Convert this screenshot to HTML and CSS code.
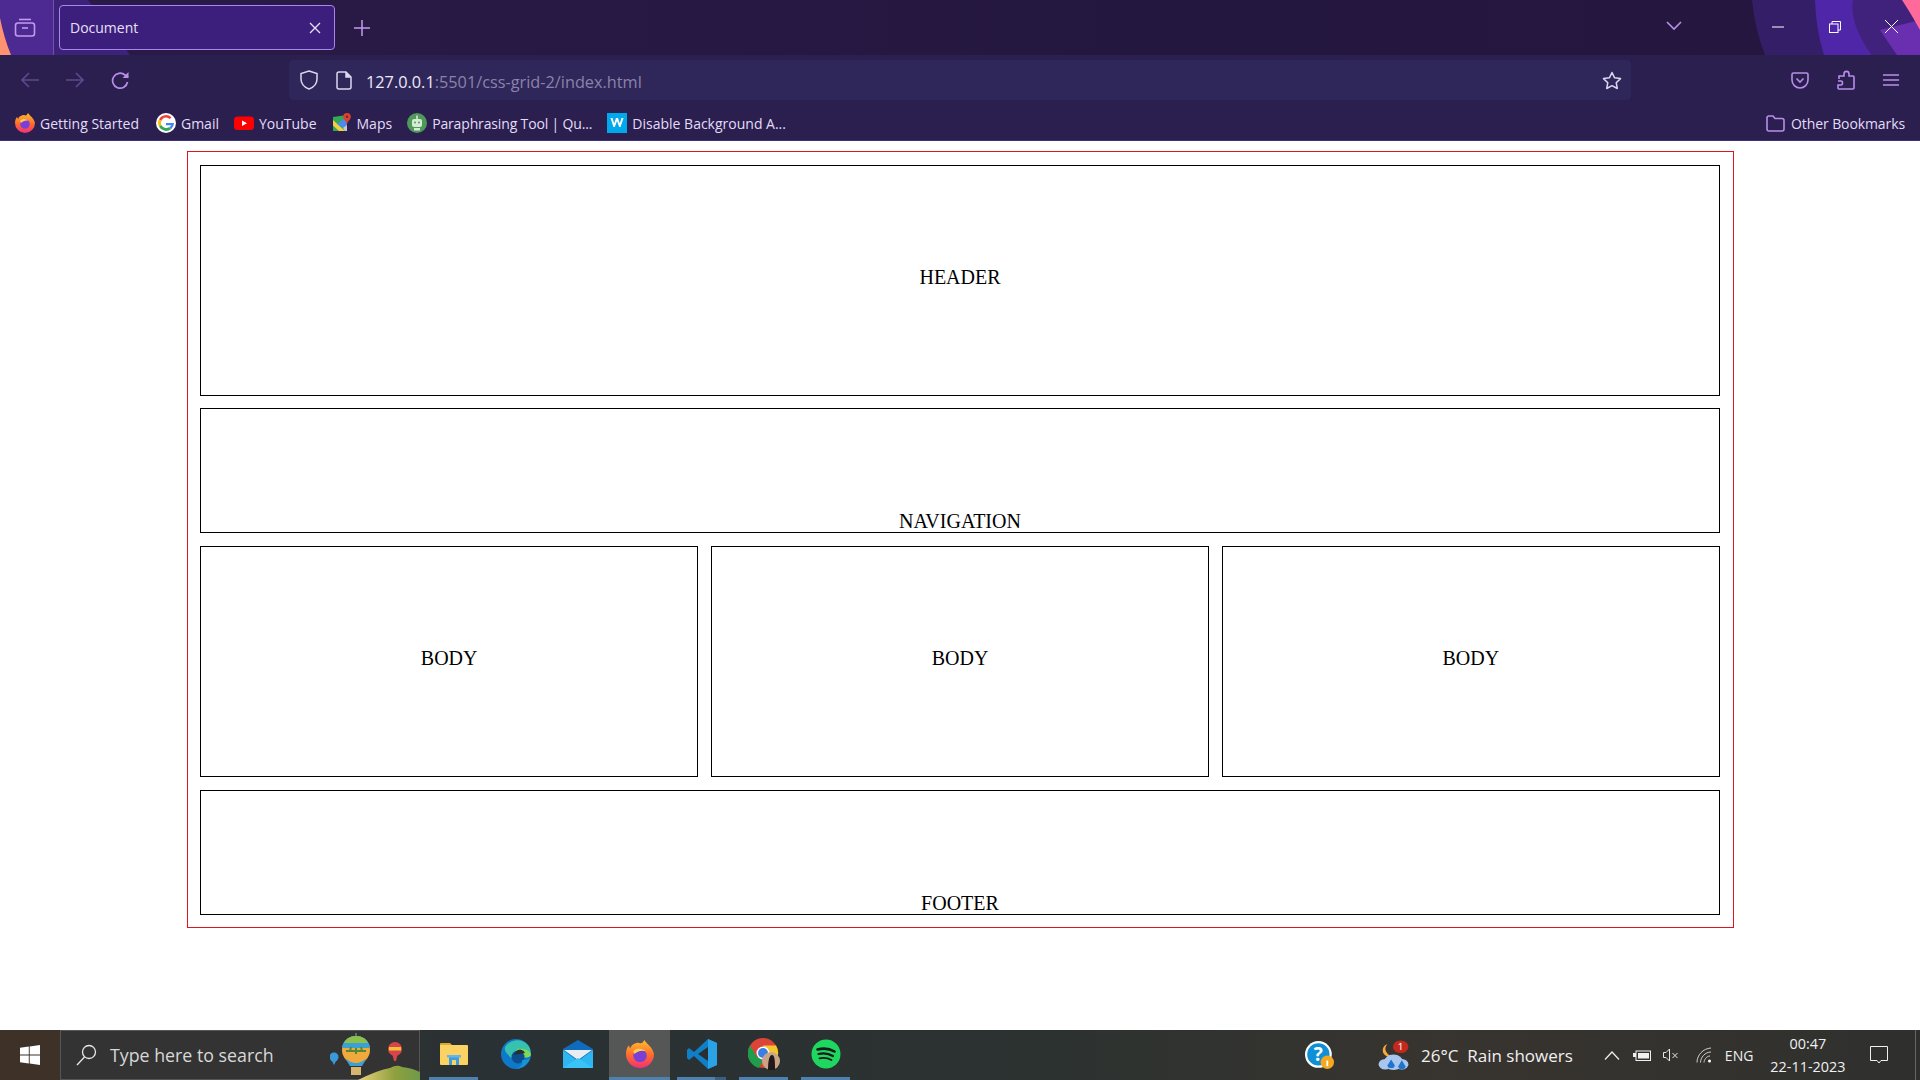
FILE: index.html
```html
<!DOCTYPE html>
<html lang="en">
<head>
  <meta charset="UTF-8" />
  <title>Document</title>
  <link rel="stylesheet" href="styles.css">
</head>
<body>
  <div class="tabbar">
    <svg class="swoosh" width="1920" height="55" viewBox="0 0 1920 55">
      <path d="M0 0H54V55H0Z" fill="#4d2a92"/>
      <path d="M54 0H88Q110 28 130 55H54Z" fill="#3c2279"/>
      <path d="M0 18Q4 38 11 55H0Z" fill="#ff9270"/>
      <path d="M1752 0Q1755 30 1765 55H1920V0Z" fill="#351e68"/>
      <path d="M1815 0Q1816 30 1824 55H1872Q1850 25 1853 0Z" fill="#5026a8"/>
      <path d="M1853 0Q1850 25 1872 55H1920V0Z" fill="#40227c"/>
      <path d="M1880 30Q1890 45 1897 55H1920V20Z" fill="#6a2eb0"/>
      <path d="M1902 0Q1910 12 1920 30V0Z" fill="#ff6a9a"/>
    </svg>
    <div class="tabs-btn">
      <svg width="22" height="22" viewBox="0 0 22 22" fill="none" stroke="#c39af0" stroke-width="1.6"><path d="M5 3.5H17"/><rect x="1.5" y="7" width="19" height="13" rx="2.5"/><path d="M8 12H14"/></svg>
    </div>
    <div class="tab">
      <span class="tab-title">Document</span>
      <svg width="12" height="12" viewBox="0 0 12 12" stroke="#e9e2fa" stroke-width="1.3"><path d="M1 1L11 11M11 1L1 11"/></svg>
    </div>
    <svg class="new-tab" width="16" height="16" viewBox="0 0 16 16" stroke="#c39af0" stroke-width="1.5"><path d="M8 0V16M0 8H16"/></svg>
    <div class="tabbar-gap"></div>
    <svg class="tab-list" width="16" height="10" viewBox="0 0 16 10" fill="none" stroke="#b98ee8" stroke-width="1.6"><path d="M1 1L8 8L15 1"/></svg>
    <div class="win-btns">
      <svg width="12" height="12" viewBox="0 0 12 12" stroke="#fff" stroke-width="1"><path d="M0 6H12"/></svg>
      <svg width="12" height="12" viewBox="0 0 12 12" fill="none" stroke="#fff" stroke-width="1"><rect x=".5" y="3" width="8.500" height="8.500"/><path d="M3 3V.5H11.500V9H9"/></svg>
      <svg width="13" height="13" viewBox="0 0 13 13" stroke="#fff" stroke-width="1"><path d="M0 0L13 13M13 0L0 13"/></svg>
    </div>
  </div>

  <div class="toolbar">
    <div class="nav-btns">
      <svg width="18" height="16" viewBox="0 0 18 16" fill="none" stroke="#5d4a8c" stroke-width="1.6"><path d="M18 8H1M8 1L1 8L8 15"/></svg>
      <svg width="18" height="16" viewBox="0 0 18 16" fill="none" stroke="#5d4a8c" stroke-width="1.6"><path d="M0 8H17M10 1L17 8L10 15"/></svg>
      <svg width="19" height="19" viewBox="0 0 19 19" fill="none" stroke="#b98ee8" stroke-width="1.7"><path d="M16.500 11A7.500 7.500 0 1 1 14 4L17 6.500"/><path d="M17.500 1V7H11.500" fill="#b98ee8" stroke="none"/></svg>
    </div>
    <div class="urlbar">
      <svg width="18" height="20" viewBox="0 0 18 20" fill="none" stroke="#ddd6f0" stroke-width="1.5"><path d="M9 1L17 3.500V9C17 14 13 17.500 9 19C5 17.500 1 14 1 9V3.500Z"/></svg>
      <svg class="doc-icon" width="16" height="19" viewBox="0 0 16 19" fill="none" stroke="#ddd6f0" stroke-width="1.500"><path d="M3 1H10L15 6V16A2 2 0 0 1 13 18H3A2 2 0 0 1 1 16V3A2 2 0 0 1 3 1Z"/><path d="M10 1V6H15" fill="#ddd6f0"/></svg>
      <span class="url"><span class="url-host">127.0.0.1</span>:5501/css-grid-2/index.html</span>
      <svg width="20" height="19" viewBox="0 0 20 19" fill="none" stroke="#ddd6f0" stroke-width="1.500" stroke-linejoin="round"><path d="M10 1.500L12.600 6.800L18.500 7.600L14.200 11.700L15.300 17.500L10 14.700L4.700 17.500L5.800 11.700L1.500 7.600L7.400 6.800Z"/></svg>
    </div>
    <div class="tool-btns">
      <svg width="18" height="17" viewBox="0 0 18 17" fill="none" stroke="#b98ee8" stroke-width="1.600"><path d="M2.500 1H15.500A1.500 1.500 0 0 1 17 2.500V8A8 8 0 0 1 1 8V2.500A1.500 1.500 0 0 1 2.500 1Z"/><path d="M5.500 6.500L9 10L12.500 6.500"/></svg>
      <svg width="18" height="20" viewBox="0 0 18 20" fill="none" stroke="#b98ee8" stroke-width="1.600"><path d="M1 11H4C6 11 6 15 4 15H1V18A1 1 0 0 0 2 19H16A1 1 0 0 0 17 18V7A1 1 0 0 0 16 6H12V4C12 .5 7 .5 7 4V6H2V9"/></svg>
      <svg width="16" height="12" viewBox="0 0 16 12" stroke="#b98ee8" stroke-width="1.500"><path d="M0 1H16M0 6H16M0 11H16"/></svg>
    </div>
  </div>

  <div class="bookmarks">
    <a class="bm bm-first">
      <svg width="20" height="20" viewBox="0 0 20 20"><use href="#ff-logo"/></svg>
      Getting Started
    </a>
    <a class="bm">
      <svg width="20" height="20" viewBox="0 0 20 20"><use href="#g-logo"/></svg>
      Gmail
    </a>
    <a class="bm">
      <svg width="20" height="20" viewBox="0 0 20 20"><rect y="3.500" width="20" height="13.500" rx="3.500" fill="#f00"/><path d="M8 7.500L13 10.200L8 13Z" fill="#fff"/></svg>
      YouTube
    </a>
    <a class="bm">
      <svg width="20" height="20" viewBox="0 0 20 20"><path d="M1 4L15 2V18H1Z" fill="#34a853"/><path d="M1 7L13 18H7L1 12.500Z" fill="#f4d03f"/><path d="M5 11L15 4V12L11 15Z" fill="#4c8bf5"/><path d="M11 15L15 12V18H13Z" fill="#c9c9c9"/><path d="M15 0A3.800 3.800 0 0 1 18.800 3.800C18.800 6.500 16 8 15 11C14 8 11.200 6.500 11.200 3.800A3.800 3.800 0 0 1 15 0Z" fill="#d9432f"/><circle cx="15" cy="3.800" r="1.300" fill="#8c2318"/></svg>
      Maps
    </a>
    <a class="bm bm-para">
      <svg width="20" height="20" viewBox="0 0 20 20"><circle cx="10" cy="10" r="10" fill="#4f9a58"/><rect x="5" y="6" width="10" height="8" rx="2" fill="#d8ead8"/><circle cx="8" cy="9.500" r="1" fill="#4f9a58"/><circle cx="12" cy="9.500" r="1" fill="#4f9a58"/><rect x="9.200" y="2.500" width="1.600" height="3.500" fill="#d8ead8"/><rect x="7" y="15" width="6" height="2.500" fill="#d8ead8"/></svg>
      Paraphrasing Tool | Qu...
    </a>
    <a class="bm">
      <svg width="20" height="20" viewBox="0 0 20 20"><rect width="20" height="20" fill="#00a8ec"/><path d="M3.500 5L6.500 14H7.800L10 8L12.200 14H13.500L16.500 5H14.500L12.800 10.500L11 5H9L7.200 10.500L5.500 5Z" fill="#fff"/></svg>
      Disable Background A...
    </a>
    <div class="bm-gap"></div>
    <a class="bm bm-other">
      <svg width="19" height="17" viewBox="0 0 19 17" fill="none" stroke="#b98ee8" stroke-width="1.600"><path d="M1 3A2 2 0 0 1 3 1H7L9 3.500H16A2 2 0 0 1 18 5.500V14A2 2 0 0 1 16 16H3A2 2 0 0 1 1 14Z"/></svg>
      Other Bookmarks
    </a>
  </div>

  <main class="page">
    <div class="container">
      <div class="box box-full box-tall">HEADER</div>
      <div class="box box-full box-short">NAVIGATION</div>
      <div class="box box-tall">BODY</div>
      <div class="box box-tall">BODY</div>
      <div class="box box-tall">BODY</div>
      <div class="box box-full box-short">FOOTER</div>
    </div>
  </main>

  <div class="taskbar">
    <div class="start">
      <svg width="20" height="20" viewBox="0 0 20 20" fill="#fff"><path d="M0 2.800L8.800 1.600V9.500H0ZM9.700 1.500L20 0V9.500H9.700ZM0 10.500H8.800V18.400L0 17.200ZM9.700 10.500H20V20L9.700 18.500Z"/></svg>
    </div>
    <div class="search">
      <svg width="21" height="22" viewBox="0 0 21 22" fill="none" stroke="#e8e8e8" stroke-width="1.300"><circle cx="13" cy="8" r="6.500"/><path d="M8.500 13L1 21"/></svg>
      <span class="search-text">Type here to search</span>
      <svg class="balloons" width="90" height="50" viewBox="0 0 90 50">
        <defs>
          <linearGradient id="hill" x1="0" y1="0" x2="1" y2="0"><stop offset="0" stop-color="#e8d27a"/><stop offset=".6" stop-color="#8f9f3e"/><stop offset="1" stop-color="#6f9a4a"/></linearGradient>
        </defs>
        <path d="M28 50Q48 40 60 38Q67 34 72 37Q82 38 90 42V50Z" fill="url(#hill)"/>
        <circle cx="4" cy="27" r="4.500" fill="#3a9ad9"/><path d="M1.500 30H6.500L4 35Z" fill="#3a9ad9"/>
        <path d="M26 3V7" stroke="#5a8f7a" stroke-width="1.500"/>
        <ellipse cx="26" cy="20" rx="14" ry="14" fill="#f0a93a"/>
        <path d="M12 18C13 10 19 6 26 6S39 10 40 18Z" fill="#3aa0d8"/>
        <path d="M14 13C16 9 20 6 26 6S36 9 38 13Z" fill="#8cc04a"/>
        <path d="M16 21H36M20 21L21 17M26 24V18M32 21L31 17" stroke="#4f8a3a" stroke-width="2"/>
        <path d="M15 28Q26 38 37 28L32 36H20Z" fill="#3aa0d8"/>
        <rect x="21" y="37" width="10" height="8" fill="#d6b56c"/>
        <circle cx="65" cy="19" r="7" fill="#d9434e"/><rect x="59" y="17" width="12" height="3.500" fill="#f2c233"/><path d="M62.500 25H67.500L66 31H64Z" fill="#d9434e"/>
      </svg>
    </div>
    <div class="apps">
      <div class="app running">
        <svg width="28" height="24" viewBox="0 0 28 24"><path d="M0 2A1 1 0 0 1 1 1H10L12 3H0Z" fill="#e0a82e"/><path d="M0 3H27A1 1 0 0 1 28 4V22A1 1 0 0 1 27 23H1A1 1 0 0 1 0 22Z" fill="#fcd262"/><path d="M9 14H19V23H16V18H12V23H9Z" fill="#3f9ddb"/><rect x="7" y="13" width="14" height="2.500" fill="#62b6ec"/></svg>
      </div>
      <div class="app">
        <svg width="30" height="30" viewBox="0 0 30 30"><circle cx="15" cy="15" r="15" fill="#0f78c9"/><path d="M4 8C8 1 20-2 27 6C31 11 30 17 26 18C20 19 14 17 10 19C6 14 3 13 4 8Z" fill="#37c2b0"/><path d="M16 10C24 9 30 12 30 16C29 19 24 19 20 18C17 17 14 15 16 10Z" fill="#7ed957"/><circle cx="17" cy="18" r="6.500" fill="#0b4f8f"/><path d="M15 13A5 5 0 0 1 24 14L12 16Z" fill="#292f31"/><path d="M21 21C24 21 27 21 29 19C27 26 20 30 15 30C20 28 22 25 21 21Z" fill="#1595d8"/></svg>
      </div>
      <div class="app">
        <svg width="30" height="28" viewBox="0 0 30 28"><path d="M15 0L30 9V28H0V9Z" fill="#0f6cbd"/><path d="M1 10H29L15 20Z" fill="#e9edf1"/><path d="M0 10L15 21L30 10V28H0Z" fill="#2eb6f0"/><path d="M0 28L15 18L30 28Z" fill="#39c3f7"/></svg>
      </div>
      <div class="app active running">
        <svg width="28" height="28" viewBox="0 0 20 20"><use href="#ff-logo"/></svg>
      </div>
      <div class="app running split">
        <svg width="30" height="30" viewBox="0 0 30 30"><path d="M21 0L30 4V26L21 30L7 17L2 21L0 19V11L2 9L7 13Z" fill="#0f7fc7"/><path d="M21 0L30 4V26L21 30Z" fill="#2aa2e6"/><path d="M21 8L11 15L21 22Z" fill="#292f31"/></svg>
      </div>
      <div class="app running">
        <svg width="32" height="32" viewBox="0 0 32 32"><circle cx="15" cy="15" r="15" fill="#db4437"/><path d="M15 7.500H28A15 15 0 0 1 18 30L22 18Z" fill="#f7c530"/><path d="M2 7.500L9 19L15 22L11 30A15 15 0 0 1 2 7.500Z" fill="#1f9d4c"/><circle cx="15" cy="15" r="6.500" fill="#fff"/><circle cx="15" cy="15" r="5" fill="#3a7fe6"/><circle cx="23" cy="23" r="9" fill="#c9a487"/><path d="M20 32C20 24 21 17 24 17S27 24 27 32Z" fill="#221a1a"/></svg>
      </div>
      <div class="app running">
        <svg width="30" height="30" viewBox="0 0 30 30"><circle cx="15" cy="15" r="14.500" fill="#1ed760"/><path d="M6.500 10.500C12 9 18.500 9.500 23.500 12.500" fill="none" stroke="#1a1a1a" stroke-width="2.600" stroke-linecap="round"/><path d="M7.500 15C12 13.800 17.500 14.300 22 17" fill="none" stroke="#1a1a1a" stroke-width="2.200" stroke-linecap="round"/><path d="M8.500 19.300C12.500 18.400 16.800 18.800 20.500 21" fill="none" stroke="#1a1a1a" stroke-width="1.800" stroke-linecap="round"/></svg>
      </div>
    </div>
    <div class="tray">
      <svg class="help-icon" width="29" height="28" viewBox="0 0 26 25"><circle cx="12" cy="12" r="12" fill="#fff"/><circle cx="12" cy="12" r="10" fill="#0f8fd6"/><text x="12" y="18" font-size="17" font-weight="700" font-family="Open Sans" text-anchor="middle" fill="#fff">?</text><circle cx="20" cy="19" r="6" fill="#f4a81f"/><rect x="19.200" y="17.500" width="1.600" height="5" fill="#fff"/></svg>
      <svg class="weather-icon" width="31" height="31" viewBox="0 0 26 32" preserveAspectRatio="none"><path d="M4 10A7 7 0 0 0 14 17A8 8 0 0 1 8 4A7 7 0 0 0 4 10Z" fill="#f3a93b"/><circle cx="13" cy="23" r="8" fill="#a9c6ee"/><circle cx="6" cy="25" r="5.500" fill="#a9c6ee"/><circle cx="20" cy="25" r="5.500" fill="#a9c6ee"/><path d="M11 20L14 26A3 3 0 0 1 8 26Z" fill="#1f74cf"/><path d="M20 21L23 27A3 3 0 0 1 17 27Z" fill="#1f74cf"/><circle cx="19" cy="7" r="6.500" fill="#c5281c"/><text x="19" y="10.500" font-size="9" font-family="Open Sans" text-anchor="middle" fill="#fff">1</text></svg>
      <span class="weather">26°C&nbsp; Rain showers</span>
      <svg class="tray-chev" width="16" height="9" viewBox="0 0 16 9" fill="none" stroke="#f0f0f0" stroke-width="1.200"><path d="M1 8.500L8 1L15 8.500"/></svg>
      <svg class="tray-batt" width="18" height="11" viewBox="0 0 18 11" fill="#f0f0f0"><rect x="3" y="1" width="14.500" height="9.500" fill="none" stroke="#f0f0f0"/><rect x="5" y="3" width="11" height="5.500"/><rect y="3" width="3" height="4"/></svg>
      <svg class="tray-vol" width="16" height="14" viewBox="0 0 16 14" fill="none" stroke="#e8e8e8" stroke-width="1"><path d="M.5 4.500H3L6.500 1V13L3 9.500H.5Z"/><path d="M9.500 5L14.500 10M14.500 5L9.500 10"/></svg>
      <svg class="tray-wifi" width="16" height="16" viewBox="0 0 16 16" fill="none" stroke="#cfcfcf" stroke-width="1"><path d="M1 15.500C1 8 7 1.500 15 1M4.500 15.500C4.500 10.500 9 5 15 5M8 15.500C8 13 10.500 9 14 9"/><circle cx="13.500" cy="14" r="1.500" fill="#fff" stroke="none"/></svg>
      <span class="lang">ENG</span>
      <div class="clock"><span>00:47</span><span>22-11-2023</span></div>
      <svg class="notify" width="18" height="18" viewBox="0 0 18 18" fill="none" stroke="#f0f0f0" stroke-width="1"><path d="M.5 .5H17.500V14.500H11L9 17L7 14.500H.5Z"/></svg>
      <div class="show-desktop"></div>
    </div>
  </div>

  <svg class="defs" width="0" height="0">
    <defs>
      <linearGradient id="ff-a" x1="0" y1="0" x2="0" y2="1"><stop offset="0" stop-color="#ffbd2e"/><stop offset=".55" stop-color="#ff6a2b"/><stop offset="1" stop-color="#f0307a"/></linearGradient>
      <symbol id="ff-logo" viewBox="0 0 20 20">
        <path d="M13 0C15 3 19 5 20 10A10 10 0 1 1 0 10C0 7 1 5 2 4L3 6C4 3 7 2 9 2C11 3 12 2 13 0Z" fill="url(#ff-a)"/>
        <circle cx="10" cy="11" r="4.800" fill="#7a3fd6"/>
        <path d="M5 8C8 5 12 6 14 8C11 7 8 8 6 10Z" fill="#ffcc4d"/>
      </symbol>
      <symbol id="g-logo" viewBox="0 0 20 20">
        <circle cx="10" cy="10" r="10" fill="#fff"/>
        <path d="M10 4.500A5.500 5.500 0 0 1 13.800 6L15.500 4.200A8 8 0 0 0 3 6.300L5.300 8A5.500 5.500 0 0 1 10 4.500Z" fill="#ea4335"/>
        <path d="M5.300 8L3 6.300A8 8 0 0 0 3 13.700L5.300 12A5.500 5.500 0 0 1 5.300 8Z" fill="#fbbc05"/>
        <path d="M3 13.700A8 8 0 0 0 15.300 16L13 14.200A5.500 5.500 0 0 1 5.300 12Z" fill="#34a853"/>
        <path d="M18 10H10V12.200H15.300A5 5 0 0 1 13 14.200L15.300 16A8 8 0 0 0 18 10Z" fill="#4285f4"/>
      </symbol>
    </defs>
  </svg>
</body>
</html>
```

FILE: styles.css
```css
* {
  box-sizing: border-box;
}
html, body {
  height: 100%;
}
body {
  margin: 0;
  display: flex;
  flex-direction: column;
  height: 100vh;
  overflow: hidden;
  font-family: 'Open Sans', 'Noto Sans', sans-serif;
  background: #fff;
}
svg {
  flex: none;
  display: block;
}
.defs {
  position: absolute;
}

/* browser tabs */
.tabbar {
  position: relative;
  height: 55px;
  flex: none;
  display: flex;
  align-items: center;
  background: linear-gradient(to right, #2a1a48, #24173f 60%, #25163f);
}
.swoosh {
  position: absolute;
  top: 0;
  left: 0;
}
.tabbar > *:not(.swoosh) {
  position: relative;
}
.tabs-btn {
  width: 54px;
  height: 55px;
  padding: 16px 0 0 14px;
  border-right: 1px solid #6f55a8;
}
.tab {
  margin-left: 5px;
  width: 276px;
  height: 45px;
  padding: 0 13px 0 10px;
  display: flex;
  align-items: center;
  justify-content: space-between;
  background: #3c1f7c;
  border: 1px solid #a985ee;
  border-radius: 4px;
}
.tab-title {
  font-size: 14px;
  color: #e6e0f7;
}
.new-tab {
  margin-left: 19px;
}
.tabbar-gap {
  flex: 1;
}
.tab-list {
  margin-top: -3px;
  margin-right: 90px;
}
.win-btns {
  width: 148px;
  padding-right: 22px;
  display: flex;
  align-items: center;
  justify-content: space-between;
  margin-top: -2px;
}

/* address bar row */
.toolbar {
  height: 50px;
  flex: none;
  display: flex;
  align-items: center;
  background: #2b1f50;
}
.nav-btns {
  width: 289px;
  padding-left: 21px;
  display: flex;
  align-items: center;
  gap: 27px;
}
.urlbar {
  width: 1342px;
  height: 40px;
  padding: 0 9px 0 11px;
  display: flex;
  align-items: center;
  background: #2f2759;
  border-radius: 4px;
}
.doc-icon {
  margin-left: 18px;
}
.url {
  flex: 1;
  margin-left: 14px;
  padding-top: 3px;
  font-size: 16.300px;
  color: #8b83aa;
}
.url-host {
  color: #eeeaf9;
}
.tool-btns {
  flex: 1;
  padding: 0 21px 0 160px;
  display: flex;
  align-items: center;
  justify-content: space-between;
}

/* bookmarks row */
.bookmarks {
  height: 36px;
  flex: none;
  display: flex;
  align-items: center;
  gap: 15px;
  padding: 1px 15px 0 15px;
  background: #2b1f50;
  border-bottom: 1px solid #3f3274;
  font-size: 14px;
  color: #e2ddf6;
}
.bm {
  display: flex;
  align-items: center;
  gap: 5px;
  white-space: nowrap;
}
.bm-first {
  margin-right: 2px;
}
.bm-para {
  letter-spacing: -0.15px;
}
.bm-other {
  gap: 6px;
  letter-spacing: -0.1px;
}
.bm-gap {
  flex: 1;
}

/* the page in the browser */
.page {
  flex: 1;
  padding: 10px 186px 0 187px;
}
.container {
  display: grid;
  grid-template-columns: repeat(3, 1fr);
  gap: 12.500px;
  padding: 12.600px 13px 12.500px 12px;
  border: 1px solid #e0141c;
  font-family: 'Liberation Serif', serif;
  font-size: 20px;
  color: #000;
}
.box {
  display: flex;
  align-items: center;
  justify-content: center;
  padding-bottom: 6px;
  border: 1px solid #000;
  text-align: center;
}
.box-full {
  grid-column: 1 / -1;
}
.box-tall {
  height: 231.250px;
}
.box-short {
  height: 125px;
  align-items: flex-end;
  padding-bottom: 0;
  line-height: 21px;
}

/* windows taskbar */
.taskbar {
  height: 50px;
  flex: none;
  display: flex;
  align-items: center;
  background: linear-gradient(to right, #3c3128, #2a3134 25%, #2c3230 55%, #38342f 75%, #2f302e);
}
.start {
  width: 60px;
  height: 50px;
  padding: 15px 0 0 20px;
  background: #3d3128;
}
.search {
  position: relative;
  width: 360px;
  height: 50px;
  padding-left: 15px;
  display: flex;
  align-items: center;
  background: #333;
  border: 1px solid #565656;
}
.search-text {
  margin-left: 13px;
  font-size: 17.800px;
  color: #d8d8d8;
}
.balloons {
  position: absolute;
  right: -1px;
  bottom: -1px;
}
.apps {
  display: flex;
  height: 50px;
  padding-left: 3px;
}
.app {
  position: relative;
  width: 61px;
  height: 50px;
  margin-right: 1px;
  padding-bottom: 2px;
  display: flex;
  align-items: center;
  justify-content: center;
}
.app.running::after {
  content: "";
  position: absolute;
  left: 6px;
  right: 6px;
  bottom: 0;
  height: 3px;
  background: #4d82b0;
}
.app.active {
  background: #545756;
}
.app.active::after {
  left: 0;
  right: 0;
}
.app.split::after {
  background: linear-gradient(to right, #4d82b0 78%, #3a5f80 78%);
}
.tray {
  flex: 1;
  height: 50px;
  display: flex;
  align-items: center;
  color: #f0f0f0;
  padding-left: 448px;
}
.weather-icon {
  margin-left: 44px;
}
.weather {
  margin-left: 12px;
  font-size: 17px;
  white-space: nowrap;
}
.tray-chev {
  margin-left: 31px;
}
.tray-batt {
  margin-left: 13px;
}
.tray-vol {
  margin-left: 12px;
}
.tray-wifi {
  margin-left: 17px;
}
.lang {
  margin-left: 13px;
  font-size: 14px;
}
.clock {
  margin-left: 17px;
  display: flex;
  flex-direction: column;
  align-items: center;
  font-size: 14.400px;
  line-height: 23px;
}
.notify {
  margin-left: 25px;
}
.show-desktop {
  margin-left: auto;
  width: 1px;
  height: 50px;
  background: #666;
  margin-right: 4px;
}
```
